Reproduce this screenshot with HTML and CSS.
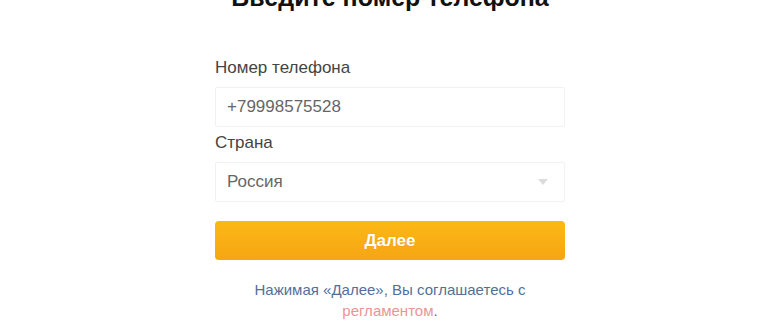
FILE: index.html
```html
<!DOCTYPE html>
<html lang="ru">
<head>
    <meta charset="UTF-8">
    <meta name="viewport" content="width=device-width, initial-scale=1.0">
    <title>Введите номер телефона</title>
    <link rel="stylesheet" href="styles.css">
</head>
<body>
    <div class="container">
        <h1>Введите номер телефона</h1>

        <div class="field">
            <div class="field-label">Номер телефона</div>
            <div class="input">+79998575528</div>
        </div>

        <div class="field">
            <div class="field-label">Страна</div>
            <div class="input select">
                <span>Россия</span>
                <span class="arrow"></span>
            </div>
        </div>

        <button class="next">Далее</button>

        <p class="terms">Нажимая «Далее», Вы соглашаетесь с <a href="#">регламентом</a>.</p>
    </div>
</body>
</html>
```

FILE: styles.css
```css
body {
    font-family: "Liberation Sans", Arial, sans-serif;
    margin: 0;
    background-color: #ffffff;
    overflow: hidden;
}
.container {
    width: 350px;
    margin: 0 auto;
    padding-left: 10px;
}
h1 {
    margin: -18px -60px 46px;
    font-size: 25px;
    line-height: 30px;
    font-weight: bold;
    color: #111;
    text-align: center;
}
.field {
    margin-bottom: 6px;
}
.field-label {
    margin-bottom: 9px;
    font-size: 17px;
    line-height: 20px;
    color: #444;
}
.input {
    display: flex;
    align-items: center;
    justify-content: space-between;
    box-sizing: border-box;
    height: 40px;
    padding: 0 16px 0 11px;
    border: 1px solid #f1f1f1;
    border-radius: 2px;
    font-size: 17px;
    color: #666;
}
.arrow {
    width: 0;
    height: 0;
    border-left: 5px solid transparent;
    border-right: 5px solid transparent;
    border-top: 6px solid #dcdcdc;
}
button.next {
    display: block;
    width: 100%;
    height: 39px;
    margin-top: 19px;
    border: none;
    border-radius: 4px;
    background: linear-gradient(to bottom, #fcb816, #f6a514);
    color: white;
    font-family: inherit;
    font-size: 17px;
    font-weight: bold;
    text-shadow: 0 0 1px rgba(180, 100, 0, 0.3);
    cursor: pointer;
}
.terms {
    margin: 19px 0 0;
    font-size: 15px;
    line-height: 21px;
    color: #52709a;
    text-align: center;
}
.terms a {
    color: #e99595;
    text-decoration: none;
}
```
